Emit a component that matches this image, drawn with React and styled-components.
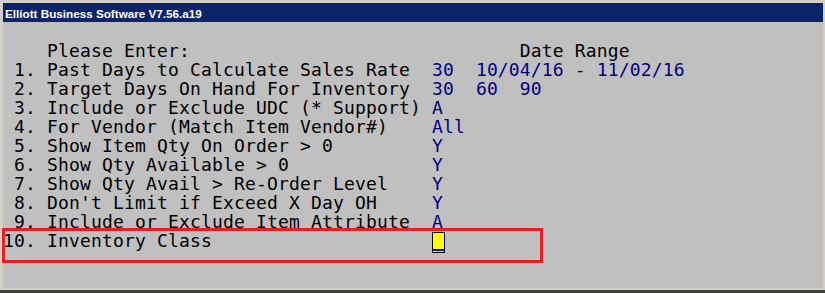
import React from 'react'
import styled, {createGlobalStyle} from 'styled-components'

const GlobalStyle = createGlobalStyle`
    html, body {
        margin: 0;
        padding: 0;
        background: #d4d0c8;
    }
`

const lines = [
    {label: ''},
    {label: '    Please Enter:', pad: 47, value: 'Date Range', plain: true},
    {label: ' 1. Past Days to Calculate Sales Rate', value: '30  10/04/16 - 11/02/16'},
    {label: ' 2. Target Days On Hand For Inventory', value: '30  60  90'},
    {label: ' 3. Include or Exclude UDC (* Support)', value: 'A'},
    {label: ' 4. For Vendor (Match Item Vendor#)', value: 'All'},
    {label: ' 5. Show Item Qty On Order > 0', value: 'Y'},
    {label: ' 6. Show Qty Available > 0', value: 'Y'},
    {label: ' 7. Show Qty Avail > Re-Order Level', value: 'Y'},
    {label: " 8. Don't Limit if Exceed X Day OH", value: 'Y'},
    {label: ' 9. Include or Exclude Item Attribute', value: 'A'},
    {label: '10. Inventory Class', cursor: true},
]

const App = () => {
    return (
        <>
            <GlobalStyle />
            <Window>
                <TitleBar>Elliott Business Software V7.56.a19</TitleBar>
                <Screen>
                    {lines.map((line, i) => (
                        <Line key={i}>
                            {line.label.padEnd(line.pad || 39, ' ')}
                            {line.value && <Value $plain={line.plain}>{line.value}</Value>}
                            {line.cursor && <Cursor />}
                        </Line>
                    ))}
                    <Highlight />
                </Screen>
            </Window>
        </>
    )
}

const Window = styled.div`
    width: 825px;
    height: 293px;
    box-sizing: border-box;
    padding: 3px 2px 2px 3px;
    background: #d4d0c8;
    border-bottom: 3px solid #404040;
    display: flex;
    flex-direction: column;
`
const TitleBar = styled.div`
    height: 19px;
    box-sizing: border-box;
    padding: 2px 0 0 2px;
    background: #0a246a;
    color: #ffffff;
    font-family: "Liberation Sans", Arial, sans-serif;
    font-weight: bold;
    font-size: 11.7px;
    line-height: 17px;
    white-space: nowrap;
`
const Screen = styled.div`
    position: relative;
    flex: 1;
    background: #c0c0c0;
    font-family: "DejaVu Sans Mono", monospace;
    font-size: 18px;
    letter-spacing: 0.16px;
    color: #000000;
`
const Line = styled.div`
    height: 19px;
    line-height: 19px;
    white-space: pre;
`
const Value = styled.span`
    color: ${p => (p.$plain ? '#000000' : '#000080')};
`
const Cursor = styled.span`
    position: relative;
    display: inline-block;
    box-sizing: border-box;
    width: 13px;
    height: 21px;
    margin-top: 1px;
    vertical-align: top;
    border: 1px solid #000000;
    background: #ffff00;
    &::after {
        content: '';
        position: absolute;
        left: 0;
        right: 0;
        bottom: 1px;
        height: 2px;
        background: #0000ff;
    }
`
const Highlight = styled.div`
    position: absolute;
    left: -1px;
    top: 206px;
    width: 541px;
    height: 35px;
    box-sizing: border-box;
    border: 3px solid #ed1c24;
    pointer-events: none;
`

export default App
